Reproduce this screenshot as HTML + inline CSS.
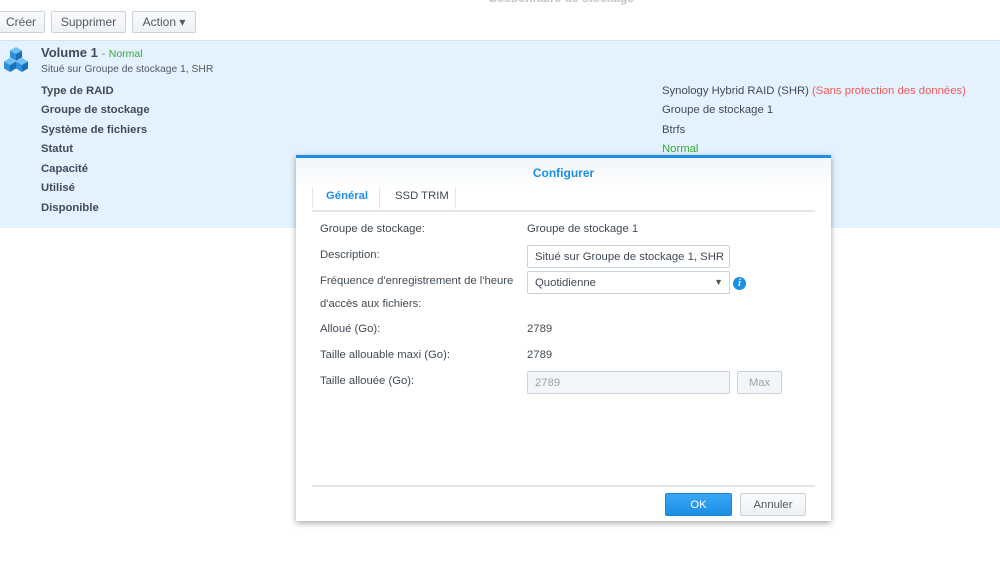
<!DOCTYPE html>
<html><head><meta charset="utf-8"><style>
*{margin:0;padding:0;box-sizing:border-box}
body{width:1000px;height:572px;overflow:hidden;background:#fff;font-family:"Liberation Sans",sans-serif;font-size:11.3px;color:#404a57;position:relative}
.abs{position:absolute}
.btn{position:absolute;top:11px;height:22px;border:1px solid #c9d2db;border-radius:2px;background:linear-gradient(#fafbfc,#eef1f4);font-size:12px;display:flex;align-items:center;justify-content:center;color:#505a64}
.panel{position:absolute;left:0;top:40px;width:1000px;height:188px;background:#e4f2fd;border-top:1px solid #d4e2ee}
.lbl{position:absolute;left:41px;font-weight:bold;font-size:11.3px;color:#414b55}
.val{position:absolute;left:662px;font-size:11.3px;color:#414b55}
.dlg{position:absolute;left:296px;top:155px;width:535px;height:366px;background:#fff;border-top:3px solid #1c8ee4;box-shadow:0 2px 6px rgba(0,0,0,.35)}
.d{position:absolute;font-size:11.3px;color:#414b55}
.inp{position:absolute;height:23px;border:1px solid #c9d2db;border-radius:2px;background:#fff;font-size:11.3px;display:flex;align-items:center;padding-left:7px;color:#414b55}
.b2{position:absolute;height:23px;border-radius:2px;display:flex;align-items:center;justify-content:center;font-size:11.3px}
</style></head><body>
<div class="abs" style="left:488px;top:-9px;font-size:12px;color:#bcc3cb;font-weight:bold">Gestionnaire de stockage</div>
<div class="btn" style="left:-3px;width:48px">Créer</div>
<div class="btn" style="left:51px;width:75px">Supprimer</div>
<div class="btn" style="left:132px;width:64px">Action ▾</div>
<div class="panel">
<svg class="abs" style="left:2px;top:5px" width="28" height="28" viewBox="0 0 28 28">
<polygon points="14,1 20,4.5 14,8 8,4.5" fill="#6cc0f5"/><polygon points="8,4.5 14,8 14,15 8,11.5" fill="#2f8fd8"/><polygon points="20,4.5 14,8 14,15 20,11.5" fill="#1a6fb8"/>
<polygon points="8,12 14,15.5 8,19 2,15.5" fill="#6cc0f5"/><polygon points="2,15.5 8,19 8,26 2,22.5" fill="#2f8fd8"/><polygon points="14,15.5 8,19 8,26 14,22.5" fill="#1a6fb8"/>
<polygon points="20,12 26,15.5 20,19 14,15.5" fill="#6cc0f5"/><polygon points="14,15.5 20,19 20,26 14,22.5" fill="#2f8fd8"/><polygon points="26,15.5 20,19 20,26 26,22.5" fill="#1a6fb8"/>
</svg>
<div class="abs" style="left:41px;top:4px;font-size:13px;font-weight:bold;color:#414b55">Volume 1 <span style="font-weight:normal;font-size:11px;color:#888">-</span> <span style="font-weight:normal;font-size:10.5px;color:#33aa33">Normal</span></div>
<div class="abs" style="left:41px;top:23px;font-size:10.3px;color:#505a64">Situé sur Groupe de stockage 1, SHR</div>
<div class="lbl" style="top:44px">Type de RAID</div>
<div class="lbl" style="top:63px">Groupe de stockage</div>
<div class="lbl" style="top:83px">Système de fichiers</div>
<div class="lbl" style="top:102px">Statut</div>
<div class="lbl" style="top:122px">Capacité</div>
<div class="lbl" style="top:141px">Utilisé</div>
<div class="lbl" style="top:161px">Disponible</div>
<div class="val" style="top:44px">Synology Hybrid RAID (SHR) <span style="color:#f05a5a">(Sans protection des données)</span></div>
<div class="val" style="top:63px">Groupe de stockage 1</div>
<div class="val" style="top:83px">Btrfs</div>
<div class="val" style="top:102px;color:#33aa33">Normal</div>
</div>
<div class="dlg">
<div class="abs" style="left:0;top:0;width:535px;height:30px;background:linear-gradient(#f0f6fc,#fff)"></div>
<div class="abs" style="left:0;top:8px;width:535px;text-align:center;font-weight:bold;font-size:12px;color:#1c8ee4">Configurer</div>
<div class="abs" style="left:16px;top:29px;width:1px;height:22px;background:#e3e8ed"></div>
<div class="abs" style="left:83px;top:29px;width:1px;height:22px;background:#e3e8ed"></div>
<div class="abs" style="left:159px;top:29px;width:1px;height:22px;background:#e3e8ed"></div>
<div class="d" style="left:30px;top:32px;font-weight:bold;color:#1c8ee4">Général</div>
<div class="d" style="left:99px;top:32px">SSD TRIM</div>
<div class="abs" style="left:16px;top:52px;width:503px;height:2px;background:#e3e6ea"></div>
<div class="d" style="left:24px;top:65px">Groupe de stockage:</div>
<div class="d" style="left:231px;top:65px">Groupe de stockage 1</div>
<div class="d" style="left:24px;top:91px">Description:</div>
<div class="inp" style="left:231px;top:87px;width:203px">Situé sur Groupe de stockage 1, SHR</div>
<div class="d" style="left:24px;top:117px">Fréquence d'enregistrement de l'heure</div>
<div class="d" style="left:24px;top:140px">d'accès aux fichiers:</div>
<div class="inp" style="left:231px;top:113px;width:203px">Quotidienne<span style="position:absolute;right:6px;top:5px;font-size:9px;color:#555">▼</span></div>
<div class="abs" style="left:437px;top:119px;width:13px;height:13px;border-radius:50%;background:#1c8ee4;color:#fff;font-size:10px;font-weight:bold;font-style:italic;text-align:center;line-height:13px;font-family:'Liberation Serif',serif">i</div>
<div class="d" style="left:24px;top:165px">Alloué (Go):</div>
<div class="d" style="left:231px;top:165px">2789</div>
<div class="d" style="left:24px;top:191px">Taille allouable maxi (Go):</div>
<div class="d" style="left:231px;top:191px">2789</div>
<div class="d" style="left:24px;top:217px">Taille allouée (Go):</div>
<div class="inp" style="left:231px;top:213px;width:203px;background:#f3f6f8;color:#9aa3ac">2789</div>
<div class="b2" style="left:441px;top:213px;width:45px;background:#f3f6f8;border:1px solid #c9d2db;color:#9aa3ac">Max</div>
<div class="abs" style="left:16px;top:327px;width:503px;height:2px;background:#e3e6ea"></div>
<div class="b2" style="left:369px;top:335px;width:67px;background:linear-gradient(#39a7f5,#1c8ee4);border:1px solid #1a85d8;color:#fff">OK</div>
<div class="b2" style="left:444px;top:335px;width:66px;background:linear-gradient(#fafbfc,#eef1f4);border:1px solid #c9d2db;color:#505a64">Annuler</div>
</div>
</body></html>
